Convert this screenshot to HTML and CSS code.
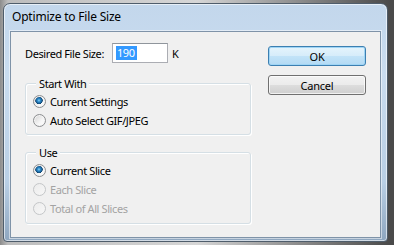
FILE: index.html
```html
<!DOCTYPE html>
<html lang="en">
<head>
	<meta charset="UTF-8">
	<title>Optimize to File Size</title>
	<link rel="stylesheet" href="styles.css">
</head>
<body>
	<div class="window">
		<div class="titlebar">Optimize to File Size</div>
		<div class="client">
			<div class="options">
				<div class="size-row">
					<span>Desired File Size:</span>
					<span class="field"><span class="selection">190</span></span>
					<span class="unit">K</span>
				</div>

				<div class="group group-start">
					<span class="group-title">Start With</span>
					<div class="radio-row">
						<span class="radio checked"></span>
						<span>Current Settings</span>
					</div>
					<div class="radio-row">
						<span class="radio"></span>
						<span>Auto Select GIF/JPEG</span>
					</div>
				</div>

				<div class="group group-use">
					<span class="group-title">Use</span>
					<div class="radio-row">
						<span class="radio checked"></span>
						<span>Current Slice</span>
					</div>
					<div class="radio-row disabled">
						<span class="radio"></span>
						<span>Each Slice</span>
					</div>
					<div class="radio-row disabled">
						<span class="radio"></span>
						<span>Total of All Slices</span>
					</div>
				</div>
			</div>

			<div class="actions">
				<button class="btn btn-default">OK</button>
				<button class="btn">Cancel</button>
			</div>
		</div>
	</div>
</body>
</html>
```

FILE: styles.css
```css
* {
	box-sizing: border-box;
}

body {
	margin: 0;
	padding: 3px 0 0 3px;
	width: 394px;
	height: 245px;
	overflow: hidden;
	font-family: "Noto Sans", "Open Sans", sans-serif;
	font-size: 11px;
	letter-spacing: -.4px;
	color: #000;
	background: linear-gradient(to right, #8c8c8c 0, #bdbdbd 2%, #d6d6d6 50%, #4a4a4a 99%);
}

.window {
	display: flex;
	flex-direction: column;
	width: 385px;
	height: 239px;
	padding: 0 6px 3px 6px;
	border: 1px solid #4f5d6b;
	border-radius: 7px 7px 4px 4px;
	background: linear-gradient(#c3d7ec 0, #c9dcef 30%, #b9cfe5 75%, #8ea6bf 100%);
	box-shadow: inset 0 0 0 1px rgba(255, 255, 255, .6);
}

.titlebar {
	height: 27px;
	padding: 4px 0 0 2px;
	font-size: 12px;
	letter-spacing: -.2px;
	color: #000;
	flex-shrink: 0;
}

.client {
	display: flex;
	flex: 1;
	padding: 11px 14px 0 14px;
	background-color: #f0f0f0;
	border: 1px solid #7f93a8;
	box-shadow: 0 0 0 1px rgba(255, 255, 255, .5);
}

.options {
	width: 226px;
}

.size-row {
	display: flex;
	align-items: center;
	height: 20px;
}

.field {
	display: flex;
	align-items: center;
	width: 56px;
	height: 20px;
	margin-left: 8px;
	padding-left: 3px;
	background-color: #fff;
	border: 1px solid #abadb3;
	border-top-color: #8f959c;
}

.selection {
	padding: 0 2px 0 1px;
	line-height: 14px;
	background-color: #3399ff;
	color: #fff;
}

.unit {
	margin-left: 4px;
}

.group {
	display: flex;
	flex-direction: column;
	border: 1px solid #d5dfe5;
	border-radius: 3px;
	box-shadow: inset 1px 1px 0 #fff, 1px 1px 0 #fff;
	padding-bottom: 4px;
}

.group-start {
	margin-top: 20px;
}

.group-use {
	margin-top: 17px;
	padding-bottom: 5px;
}

.group-title {
	align-self: flex-start;
	height: 16px;
	line-height: 16px;
	margin: -8px 0 0 10px;
	padding: 0 3px;
	background-color: #f0f0f0;
}

.radio-row {
	display: flex;
	align-items: center;
	height: 19px;
	padding-left: 7px;
}

.radio-row.disabled {
	color: #a3a3a3;
}

.radio {
	width: 13px;
	height: 13px;
	margin-right: 4px;
	border-radius: 50%;
	border: 1px solid #8c8e90;
	background: linear-gradient(135deg, #d2d2d2, #f6f6f6 60%, #fff);
	box-shadow: inset 0 0 0 1px #f4f4f4;
}

.radio.checked {
	background:
		radial-gradient(circle at 45% 40%, #8fd3f5 0, #2d8ccc 1.5px, #175d93 3px, #0c3f6b 3.5px, transparent 4px),
		linear-gradient(135deg, #d2d2d2, #f6f6f6 60%, #fff);
}

.disabled .radio {
	border-color: #c4c6c8;
	background: linear-gradient(135deg, #ececec, #f7f7f7);
	box-shadow: none;
}

.actions {
	display: flex;
	flex-direction: column;
	margin-left: auto;
	padding-top: 3px;
}

.btn {
	width: 98px;
	height: 20px;
	margin-bottom: 9px;
	padding: 0;
	font-family: inherit;
	font-size: 11px;
	letter-spacing: -.2px;
	color: #000;
	border: 1px solid #707070;
	border-radius: 3px;
	background: linear-gradient(#f2f2f2 0, #ebebeb 50%, #dddddd 51%, #cfcfcf 100%);
	box-shadow: inset 0 0 0 1px rgba(255, 255, 255, .7);
}

.btn-default {
	border-color: #3c7fb1;
	background: linear-gradient(#e5f4fc 0, #d6ecfa 50%, #c2e3f8 51%, #b3daf4 100%);
	box-shadow: inset 0 0 0 1px #9fd5f5;
}
```
